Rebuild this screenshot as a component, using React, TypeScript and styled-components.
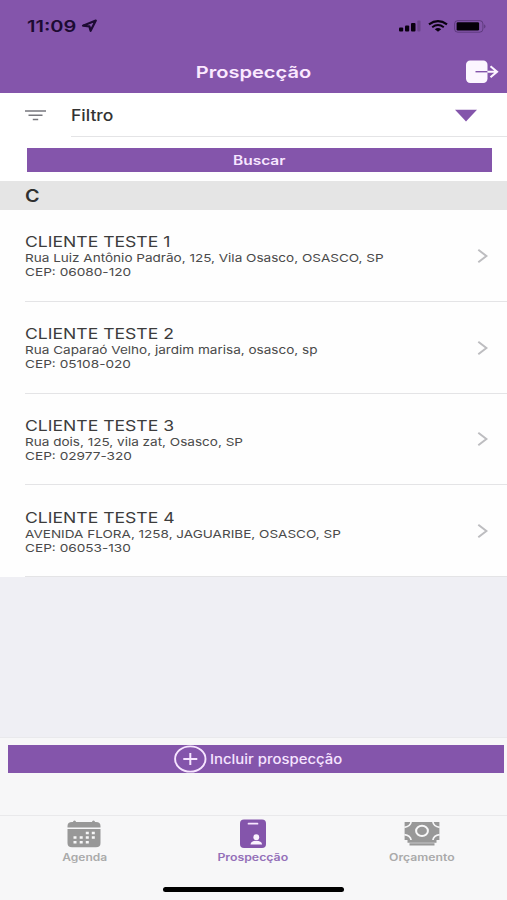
import React from "react";
import styled, { createGlobalStyle } from "styled-components";

const PURPLE = "#8455ab";

const GlobalStyle = createGlobalStyle`
  *, *::before, *::after { box-sizing: border-box; }
  body { margin: 0; background: #efeff4; font-family: Inter, "Liberation Sans", sans-serif; }
  button { font: inherit; border: 0; padding: 0; margin: 0; background: none; color: inherit; }
  h1, h2, h3, p { margin: 0; font-weight: inherit; font-size: inherit; }
  svg { display: block; flex: none; }
`;

const Screen = styled.div`
  width: 507px;
  height: 900px;
  display: flex;
  flex-direction: column;
  overflow: hidden;
  background: #efeff4;
`;

/* Wide lettering: the glyphs are expanded horizontally from the given side. */
const Wide = styled.span<{ $x: number; $from?: "left" | "center" }>`
  display: inline-block;
  white-space: nowrap;
  transform: scaleX(${(p) => p.$x});
  transform-origin: ${(p) => p.$from ?? "left"} center;
`;

const Header = styled.header`
  height: 93px;
  flex: none;
  background: ${PURPLE};
`;

const StatusBar = styled.div`
  height: 50px;
  padding: 2px 20px 0 27px;
  display: flex;
  align-items: center;
  justify-content: space-between;
  color: #1d0b32;
`;

const Clock = styled.div`
  display: flex;
  align-items: center;
  font-size: 16px;
  line-height: 20px;
  font-weight: 600;
`;

const ClockTime = styled.span`
  width: 54px;
`;

const StatusIcons = styled.div`
  display: flex;
  align-items: center;
  gap: 6.5px;
`;

const TitleBar = styled.div`
  height: 43px;
  display: grid;
  grid-template-columns: 50px 1fr 50px;
  align-items: center;
  text-align: center;
  color: #fbe9ff;
  font-size: 16.5px;
  line-height: 20px;
  font-weight: 600;
`;

const LogoutButton = styled.button`
  justify-self: end;
  margin-right: 8px;
`;

const FilterPanel = styled.section`
  height: 88px;
  flex: none;
  background: #fff;
`;

const FilterRow = styled.div`
  height: 44px;
  display: flex;
  align-items: center;
  padding-left: 25px;
`;

const FilterField = styled.div`
  flex: 1;
  height: 44px;
  margin-left: 25px;
  padding: 1px 30px 0 0;
  display: flex;
  align-items: center;
  justify-content: space-between;
  border-bottom: 1px solid #e4e4e6;
  color: #333;
  font-size: 15.5px;
  font-weight: 500;
`;

const SearchButton = styled.button`
  display: block;
  width: 465px;
  height: 24px;
  margin: 11px 0 0 27px;
  background: ${PURPLE};
  color: #f7e6ff;
  font-size: 12.5px;
  line-height: 23px;
  font-weight: 600;
`;

const SectionHeader = styled.h2`
  height: 29px;
  flex: none;
  padding-left: 25px;
  background: #e5e5e5;
  color: #303030;
  font-size: 17px;
  line-height: 31px;
  font-weight: 600;
`;

const ClientList = styled.ul`
  flex: none;
  height: 367px;
  margin: 0;
  padding: 0 0 0 24.5px;
  list-style: none;
  display: grid;
  grid-template-rows: repeat(4, 1fr);
  background: #fefefe;
`;

const ClientItem = styled.li`
  display: flex;
  justify-content: space-between;
  align-items: center;
  padding: 1px 19px 0 0;
  border-bottom: 1px solid #e4e4e6;
`;

const ClientText = styled.div`
  display: flex;
  flex-direction: column;
  align-items: flex-start;
  padding-top: 1px;
`;

const ClientName = styled.h3`
  color: #3c3c3c;
  font-size: 15px;
  line-height: 18px;
`;

const ClientLine = styled.p`
  color: #4a4a4a;
  font-size: 11px;
  line-height: 14px;
`;

const Spacer = styled.div`
  flex: 1;
`;

const Footer = styled.footer`
  height: 163px;
  flex: none;
  background: #f7f7f8;
  border-top: 1px solid #e9e9ec;
`;

const AddArea = styled.div`
  height: 77px;
  padding: 7px 3px 0 7.5px;
`;

const AddButton = styled.button`
  width: 100%;
  height: 28px;
  padding-left: 166px;
  display: flex;
  align-items: center;
  gap: 3px;
  background: ${PURPLE};
  color: #f6e4ff;
  font-size: 13px;
  line-height: 20px;
  font-weight: 500;
`;

const TabBar = styled.nav`
  height: 72px;
  padding-right: 1px;
  display: grid;
  grid-template-columns: repeat(3, 1fr);
  border-top: 1px solid #e9e9eb;
`;

const Tab = styled.button<{ $active?: boolean }>`
  height: 50px;
  display: flex;
  flex-direction: column;
  align-items: center;
  padding-top: 3px;
  gap: 1px;
  color: ${(p) => (p.$active ? PURPLE : "#989898")};
`;

const TabLabel = styled.span<{ $active?: boolean }>`
  font-size: 10px;
  line-height: 14px;
  font-weight: 600;
  color: ${(p) => (p.$active ? "#9470b8" : "#aaaaaa")};
`;

const HomeIndicator = styled.div`
  width: 181px;
  height: 5px;
  border-radius: 3px;
  margin: 0 auto;
  background: #000;
`;

const LocationIcon = () => (
  <svg width="17" height="14" viewBox="0 0 17 14">
    <path d="M2 6.7 14.8 1.6 9.6 11.8 8.4 7.4Z" fill="none" stroke="currentColor" strokeWidth="2.2" strokeLinejoin="round" />
  </svg>
);

const SignalIcon = () => (
  <svg width="22" height="12" viewBox="0 0 22 12" fill="#09000f">
    <rect x="0" y="7.5" width="4.2" height="4" rx="1" />
    <rect x="6" y="5.5" width="4.2" height="6" rx="1" />
    <rect x="12" y="3" width="4.5" height="8.5" rx="1" />
    <rect x="18.3" y="0.5" width="3.2" height="11" rx="1" opacity=".2" />
  </svg>
);

const WifiIcon = () => (
  <svg width="20" height="12" viewBox="0 0 20 12" fill="none" stroke="#09000f">
    <path d="M1 4.4Q10-2.1 19 4.4" strokeWidth="2.2" />
    <path d="M4.2 7.2Q10 2.8 15.8 7.2" strokeWidth="2" />
    <path d="M6.8 9.2Q10 6.9 13.2 9.2L10 11.8Z" fill="#09000f" stroke="none" />
  </svg>
);

const BatteryIcon = () => (
  <svg width="33" height="13" viewBox="0 0 33 13">
    <rect x=".6" y=".6" width="28.3" height="11.6" rx="3.2" fill="none" stroke="#1d0b32" strokeOpacity=".35" />
    <rect x="2.6" y="2.3" width="22.5" height="8.3" rx="1.3" fill="#050008" />
    <path d="M30.4 4.2Q32.3 6.4 30.4 8.6Z" fill="#1d0b32" fillOpacity=".5" />
  </svg>
);

const LogoutIcon = () => (
  <svg width="34" height="24" viewBox="0 0 34 24">
    <rect x="1" y=".5" width="21.5" height="22.5" rx="4.2" fill="#fcf6ff" />
    <path d="M10.5 11.7H22.5" stroke={PURPLE} strokeWidth="1.4" />
    <path d="M22.5 11.7H32M25.5 6.2 32 11.7 25.500 17.200" fill="none" stroke="#fcf6ff" strokeWidth="2.1" />
  </svg>
);

const FilterIcon = () => (
  <svg width="21" height="11" viewBox="0 0 21 11" stroke="#77777d" strokeWidth="1.5">
    <path d="M0 1H21M3.5 5.3H17.5M7.8 9.6H13.2" />
  </svg>
);

const ChevronIcon = () => (
  <svg width="11" height="16" viewBox="0 0 11 16">
    <path d="M1.3 1.8 9.4 8 1.3 14.2" fill="none" stroke="#bdbdc0" strokeWidth="2" />
  </svg>
);

const PlusIcon = () => (
  <svg width="33" height="28" viewBox="0 0 33 28" fill="none" stroke="#f6e4ff">
    <ellipse cx="16.3" cy="14" rx="15.2" ry="12.6" strokeWidth="1.9" />
    <path d="M9.3 14H23.3M16.3 8V20" strokeWidth="2" />
  </svg>
);

const CalendarIcon = () => (
  <svg width="34" height="30" viewBox="0 0 34 30">
    <path d="M7.5 3V5M26.5 3V5" stroke="currentColor" strokeWidth="3" strokeLinecap="round" />
    <path d="M.5 8.5V7Q.5 3 5 3H29Q33.5 3 33.5 7V8.5Z" fill="currentColor" />
    <path d="M.5 10H33.5V24Q33.5 28.3 29 28.3H5Q.5 28.3 .5 24Z" fill="currentColor" />
    <g fill="#f7f7f8">
      <path d="M18.8 12.7h3v2.5h-3zM24.8 12.7h3v2.5h-3z" />
      <path d="M6.5 17.3h3v2.5h-3zM12.7 17.3h3v2.5h-3zM18.8 17.3h3v2.5h-3zM24.8 17.3h3v2.5h-3z" />
      <path d="M6.5 22h3v2.5h-3zM12.7 22h3v2.5h-3zM18.8 22h3v2.5h-3z" />
    </g>
  </svg>
);

const BadgeIcon = () => (
  <svg width="28" height="30" viewBox="0 0 28 30">
    <rect x="1" y=".5" width="26" height="28.5" rx="4" fill="currentColor" />
    <path d="M9.5 4.7H18.5" stroke="#f7e6ff" strokeWidth="1.7" strokeLinecap="round" />
    <circle cx="17.3" cy="18.2" r="2.9" fill="#faf2ff" />
    <path d="M11.5 25.5Q12 21.8 17.3 21.8T23.1 25.5Z" fill="#faf2ff" />
  </svg>
);

const MoneyIcon = () => (
  <svg width="36" height="30" viewBox="0 0 36 30">
    <rect x=".6" y="3" width="34.8" height="18" fill="currentColor" />
    <g fill="none" stroke="#f7f7f8" strokeWidth="1.7">
      <ellipse cx="18" cy="11.9" rx="5.9" ry="5.2" strokeWidth="2" />
      <path d="M7.2 2.5Q6.5 7.6 .3 8.3M28.8 2.5Q29.5 7.6 35.7 8.3M7.2 21.5Q6.5 16.4 .3 15.7M28.8 21.5Q29.5 16.4 35.7 15.7" />
    </g>
    <path d="M3.5 21H32.5V23.7H3.5ZM5.5 24.2H30.5V26.5H5.5Z" fill="currentColor" />
  </svg>
);

const clients = [
  { name: "CLIENTE TESTE 1", address: "Rua Luiz Antônio Padrão, 125, Vila Osasco, OSASCO, SP", cep: "06080-120" },
  { name: "CLIENTE TESTE 2", address: "Rua Caparaó Velho, jardim marisa, osasco, sp", cep: "05108-020" },
  { name: "CLIENTE TESTE 3", address: "Rua dois, 125, vila zat, Osasco, SP", cep: "02977-320" },
  { name: "CLIENTE TESTE 4", address: "AVENIDA FLORA, 1258, JAGUARIBE, OSASCO, SP", cep: "06053-130" },
];

export default function App() {
  return (
    <Screen>
      <GlobalStyle />
      <Header>
        <StatusBar>
          <Clock>
            <ClockTime><Wide $x={1.25}>11:09</Wide></ClockTime>
            <LocationIcon />
          </Clock>
          <StatusIcons>
            <SignalIcon />
            <WifiIcon />
            <BatteryIcon />
          </StatusIcons>
        </StatusBar>
        <TitleBar>
          <span />
          <h1><Wide $x={1.215} $from="center">Prospecção</Wide></h1>
          <LogoutButton aria-label="Sair"><LogoutIcon /></LogoutButton>
        </TitleBar>
      </Header>
      <FilterPanel>
        <FilterRow>
          <FilterIcon />
          <FilterField>
            <Wide $x={1.13}>Filtro</Wide>
            <svg width="22" height="13" viewBox="0 0 22 13"><path d="M0 .8H22L11 12.5Z" fill={PURPLE} /></svg>
          </FilterField>
        </FilterRow>
        <SearchButton><Wide $x={1.24} $from="center">Buscar</Wide></SearchButton>
      </FilterPanel>
      <SectionHeader><Wide $x={1.16}>C</Wide></SectionHeader>
      <ClientList>
        {clients.map((c) => (
          <ClientItem key={c.name}>
            <ClientText>
              <ClientName><Wide $x={1.172}>{c.name}</Wide></ClientName>
              <ClientLine><Wide $x={1.231}>{c.address}</Wide></ClientLine>
              <ClientLine><Wide $x={1.24}>CEP: {c.cep}</Wide></ClientLine>
            </ClientText>
            <ChevronIcon />
          </ClientItem>
        ))}
      </ClientList>
      <Spacer />
      <Footer>
        <AddArea>
          <AddButton><PlusIcon /><Wide $x={1.145}>Incluir prospecção</Wide></AddButton>
        </AddArea>
        <TabBar>
          <Tab><CalendarIcon /><TabLabel><Wide $x={1.2} $from="center">Agenda</Wide></TabLabel></Tab>
          <Tab $active><BadgeIcon /><TabLabel $active><Wide $x={1.23} $from="center">Prospecção</Wide></TabLabel></Tab>
          <Tab><MoneyIcon /><TabLabel><Wide $x={1.22} $from="center">Orçamento</Wide></TabLabel></Tab>
        </TabBar>
        <HomeIndicator />
      </Footer>
    </Screen>
  );
}
